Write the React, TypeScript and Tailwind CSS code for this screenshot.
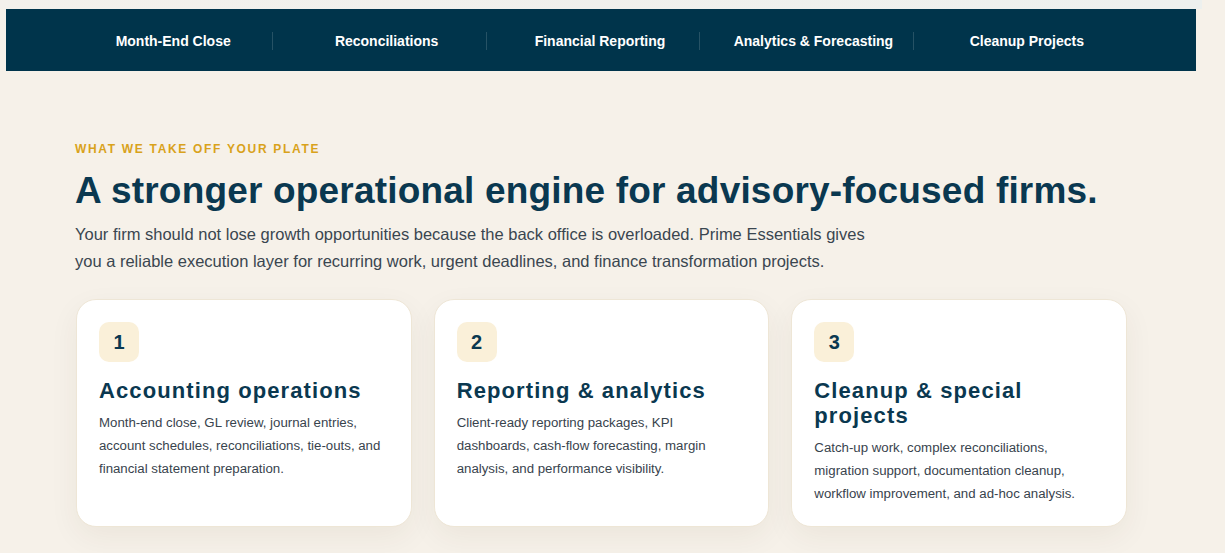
const navItems = [
  'Month-End Close',
  'Reconciliations',
  'Financial Reporting',
  'Analytics & Forecasting',
  'Cleanup Projects',
]

const services = [
  {
    num: '1',
    title: 'Accounting operations',
    body: 'Month-end close, GL review, journal entries, account schedules, reconciliations, tie-outs, and financial statement preparation.',
  },
  {
    num: '2',
    title: 'Reporting & analytics',
    body: 'Client-ready reporting packages, KPI dashboards, cash-flow forecasting, margin analysis, and performance visibility.',
  },
  {
    num: '3',
    title: 'Cleanup & special projects',
    body: 'Catch-up work, complex reconciliations, migration support, documentation cleanup, workflow improvement, and ad-hoc analysis.',
  },
]

export default function App() {
  return (
    <div className="min-h-[553px] w-full bg-[#f6f1e9] font-['Liberation_Sans',Arial,sans-serif]">
      <div className="w-[1202px]">
        <div className="h-[9px] bg-gradient-to-r from-[#f3f1ec] to-[#edf0ee]" />
        <nav className="mx-[6px] flex h-[62px] items-center bg-[#00344b] pl-[54px]">
          <ul className="mt-[2px] flex w-[1066px] items-center">
            {navItems.map((item, i) => (
              <li
                key={item}
                className={`flex h-[18px] flex-1 items-center justify-center pl-[14px] text-[14px] font-bold text-white ${
                  i > 0 ? 'border-l border-white/15' : ''
                }`}
              >
                {item}
              </li>
            ))}
          </ul>
        </nav>

        <section className="mx-auto w-[1052px] pt-[72px]">
          <p className="text-[12px] font-bold uppercase leading-none tracking-[0.14em] text-[#d9a21b]">
            What we take off your plate
          </p>
          <h2 className="mt-[15px] text-[37px] font-bold leading-[42px] tracking-[0.005em] text-[#0a3850]">
            A stronger operational engine for advisory-focused firms.
          </h2>
          <p className="mt-[9px] w-[800px] text-[16.5px] leading-[27px] text-[#3a4650]">
            Your firm should not lose growth opportunities because the back office is overloaded. Prime Essentials gives you a reliable execution layer for recurring work, urgent deadlines, and finance transformation projects.
          </p>

          <div className="mt-[24px] grid grid-cols-3 gap-[22px] pl-[1px]">
            {services.map((s) => (
              <div
                key={s.num}
                className="h-[228px] rounded-[20px] border border-[#eee6d6] bg-white px-[22px] pt-[22px] shadow-[0_10px_30px_rgba(60,45,20,0.06)]"
              >
                <div className="flex h-[40px] w-[40px] items-center justify-center rounded-[10px] bg-[#faf0d9] text-[20px] font-bold text-[#0a3850]">
                  {s.num}
                </div>
                <h3 className="mt-[16px] text-[22px] font-bold leading-[25px] tracking-[0.05em] text-[#0a3850]">
                  {s.title}
                </h3>
                <p className="mt-[8px] pr-[4px] text-[13.25px] leading-[23px] text-[#38434d]">
                  {s.body}
                </p>
              </div>
            ))}
          </div>
        </section>
      </div>
    </div>
  )
}
